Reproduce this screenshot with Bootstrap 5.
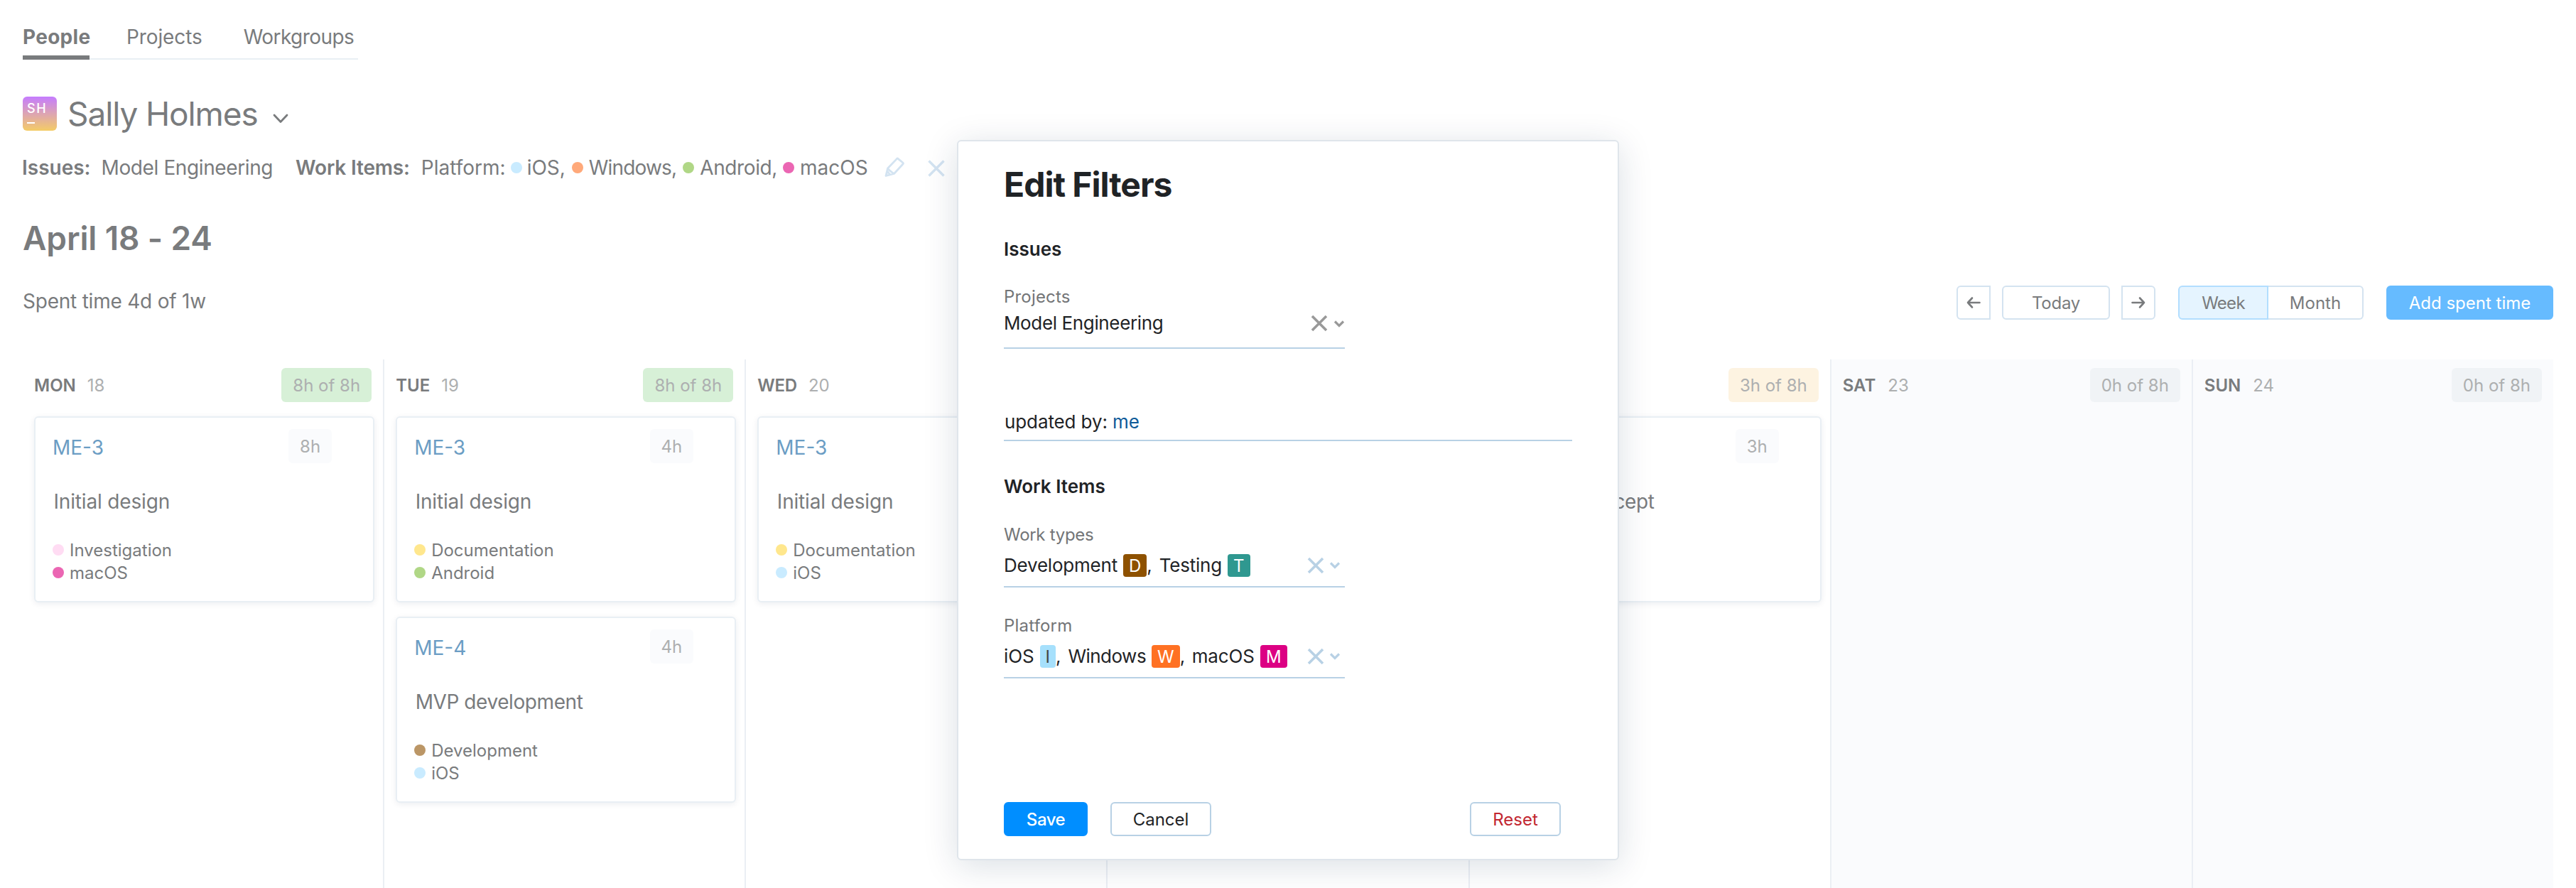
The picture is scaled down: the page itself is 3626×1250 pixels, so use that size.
<!DOCTYPE html>
<html lang="en">
<head>
<meta charset="utf-8">
<title>Timesheets</title>
<link rel="stylesheet" href="https://cdn.jsdelivr.net/npm/bootstrap@5.3.0/dist/css/bootstrap.min.css">
<style>
body{font-family:Inter,"Liberation Sans",sans-serif;font-size:28px;line-height:40px;color:#797b7d;background:#fff;overflow:hidden}
.page{width:3626px;height:1250px;padding:32px 32px 0;overflow:hidden}
svg{flex:none;fill:none;stroke:currentColor;display:block}
.tabs{width:472px;height:52px;box-shadow:inset 0 -2px #e9eff4}
.tabs a{color:inherit;text-decoration:none;height:52px}
.tabs .current{font-weight:700;letter-spacing:.01em;border-bottom:6px solid #797b7d;width:94px}
.who{margin-top:52px;height:48px}
.face{width:48px;height:48px;border-radius:6px;background:linear-gradient(#c57cff,#f4cc66);color:#fff;padding:6px 0 0 6px;font-size:18px;line-height:22px;font-weight:500;letter-spacing:1.5px}
.face i{display:block;width:11px;height:2px;background:#fff;margin-top:8px}
.who h1{font-size:46px;line-height:50px;font-weight:400;letter-spacing:-.024em;margin:0 21px 0 15px}
.filters{margin-top:32px;height:40px}
.filters b{font-weight:600}
.pale{color:#d3e3f1}
.dot{width:16px;height:16px;border-radius:50%;flex:none;background:var(--c)}
.period{margin-top:48px;font-size:46px;line-height:62px;height:60px;font-weight:600;letter-spacing:-.003em}
.tools{margin-top:38px;height:48px}
.btn{--bs-btn-font-size:24px;--bs-btn-line-height:45px;--bs-btn-padding-x:0;--bs-btn-padding-y:0;--bs-btn-border-width:2px;--bs-btn-border-radius:6px;--bs-btn-border-color:#d4e3f0;--bs-btn-color:#797b7d;height:48px}
.ico{width:48px;display:flex;align-items:center;justify-content:center}
.week{--bs-btn-bg:#e5f4ff;--bs-btn-border-color:#b2deff;width:127px;letter-spacing:-.03em}
.cal{margin-top:56px;height:744px}
.day{flex:1 1 0;padding:12px 12px 0 16px}
.day+.day{border-left:2px solid #ebeff4}
.rest{background:#fafbfd}
.dhead{font-size:24px;line-height:50px;height:48px;padding-right:4px}
.dhead b{font-weight:600}
.soft{color:#adafb0}
.pill{height:48px;line-height:50px;border-radius:6px;padding:0 16px;font-size:24px;color:#adafb0;background:var(--c)}
.issue{height:262px;margin-top:20px;border:2px solid #e9eff4;border-radius:6px;background:#fff;box-shadow:0 2px 8px rgba(0,42,76,.08);padding:16px 58px 0 24px}
.issue+.issue{margin-top:20px}
.issue a{color:#6b9dc4;text-decoration:none;padding-top:6px}
.ttl{margin:34px 0 0 1.5px;letter-spacing:-.006em}
.tagline{font-size:24px;line-height:34px;height:32px;gap:8px}
.tagline .dot{margin-top:8px}
.dlg{position:absolute;left:1347px;top:197px;width:932px;height:1014px;border:2px solid #dfe5eb;border-radius:6px;background:#fff;box-shadow:0 8px 48px rgba(0,42,76,.15);color:#1f2326;font-size:26px;line-height:32px;padding:31px 64px 0}
.dlg h2{font-size:48px;line-height:60px;font-weight:700;letter-spacing:-.021em;margin:0}
.dlg h3{font-size:26px;line-height:32px;font-weight:600;margin:0}
.lbl{font-size:24px;line-height:30px;height:28px;color:#737577;letter-spacing:.008em}
.fld{width:480px;border-bottom:2px solid #b8d1e5;letter-spacing:-.004em}
.clr{color:#b8d1e5}
.clr-dark{color:#999}
.tg{display:inline-block;height:32px;line-height:33px;border-radius:4px;padding:0 8px;font-size:24px;color:#fff;background:var(--c);margin-left:8px;letter-spacing:0;text-align:center}
.dlg .btn{--bs-btn-border-color:#b8d1e5;--bs-btn-color:#1f2326}
</style>
</head>
<body>
<div class="page">
  <nav class="tabs d-flex">
    <a class="current" href="#">People</a>
    <a href="#" style="margin-left:52px;letter-spacing:-.004em">Projects</a>
    <a href="#" style="margin-left:58px;letter-spacing:-.02em">Workgroups</a>
  </nav>
  <div class="who d-flex align-items-center">
    <div class="face">SH<i></i></div>
    <h1>Sally Holmes</h1>
    <svg width="22" height="14" stroke-width="2.8" stroke-linecap="round" stroke-linejoin="round" style="margin-top:13px"><path d="M2 2l9 9.5L20 2"/></svg>
  </div>
  <div class="filters d-flex align-items-center gap-2">
    <b style="margin-left:-1px">Issues:</b><span style="margin-left:7px;letter-spacing:-.014em">Model Engineering</span>
    <b style="margin-left:24px;letter-spacing:-.006em">Work Items:</b><span style="margin-left:8px">Platform:</span>
    <span class="dot" style="--c:#c9ebff;margin-left:-1px"></span><span style="margin-left:-1px">iOS,</span>
    <span class="dot" style="--c:#ffa97a;margin-left:1px"></span><span style="letter-spacing:-.03em">Windows,</span>
    <span class="dot" style="--c:#b0d786;margin-left:1px"></span><span style="letter-spacing:-.014em">Android,</span>
    <span class="dot" style="--c:#eb66b3"></span><span>macOS</span>
    <svg class="pale" width="32" height="32" stroke-width="2.8" stroke-linejoin="round" style="margin-left:14px"><path d="M5.5 17L18.3 3.6q1-1 2 0l6.600 5.400q1 1 0 2L14.500 24.500l-11.500 3zM5.500 17l3 3.200 5.500 4.300M3 27.500l2-6.500 4 5z"/></svg>
    <svg class="pale" width="24" height="24" stroke-width="3.4" style="margin-left:22px;margin-top:2px"><path d="M1.500 1.500l21 21M22.500 1.500l-21 21"/></svg>
  </div>
  <div class="period">April 18 - 24</div>
  <div class="tools d-flex justify-content-between">
    <span style="letter-spacing:-.008em;line-height:44px">Spent time 4d of 1w</span>
    <div class="d-flex">
      <button class="btn ico rounded-end-0"><svg width="20" height="18" stroke-width="2.600" stroke-linecap="round" stroke-linejoin="round"><path d="M18.500 9H2M8 2.500L2 9l6 6.500"/></svg></button>
      <button class="btn mx-3" style="width:152px;letter-spacing:-.01em">Today</button>
      <button class="btn ico rounded-start-0"><svg width="20" height="18" stroke-width="2.600" stroke-linecap="round" stroke-linejoin="round"><path d="M1.500 9H18M12 2.500L18 9l-6 6.500"/></svg></button>
      <div class="d-flex" style="margin:0 32px">
        <button class="btn week rounded-end-0">Week</button>
        <button class="btn rounded-start-0 border-start-0" style="width:134px">Month</button>
      </div>
      <button class="btn" style="width:235px;--bs-btn-bg:#66bbff;--bs-btn-border-color:#66bbff;--bs-btn-color:#fff">Add spent time</button>
    </div>
  </div>
  <div class="cal d-flex">
    <div class="day">
      <div class="dhead d-flex"><b>MON</b><span class="soft ms-3 me-auto">18</span><span class="pill" style="--c:#d7f0d7">8h of 8h</span></div>
      <div class="issue">
        <div class="d-flex justify-content-between"><a href="#">ME-3</a><span class="pill" style="--c:#fafbfd">8h</span></div>
        <div class="ttl">Initial design</div>
        <div class="tagline d-flex" style="margin-top:32px"><span class="dot" style="--c:#ffdcf3"></span>Investigation</div>
        <div class="tagline d-flex"><span class="dot" style="--c:#eb66b3"></span>macOS</div>
      </div>
    </div>
    <div class="day">
      <div class="dhead d-flex"><b>TUE</b><span class="soft ms-3 me-auto">19</span><span class="pill" style="--c:#d7f0d7">8h of 8h</span></div>
      <div class="issue">
        <div class="d-flex justify-content-between"><a href="#">ME-3</a><span class="pill" style="--c:#fafbfd">4h</span></div>
        <div class="ttl">Initial design</div>
        <div class="tagline d-flex" style="margin-top:32px"><span class="dot" style="--c:#ffe78d"></span>Documentation</div>
        <div class="tagline d-flex"><span class="dot" style="--c:#b0d786"></span>Android</div>
      </div>
      <div class="issue">
        <div class="d-flex justify-content-between"><a href="#">ME-4</a><span class="pill" style="--c:#fafbfd">4h</span></div>
        <div class="ttl" style="letter-spacing:-.015em">MVP development</div>
        <div class="tagline d-flex" style="margin-top:32px"><span class="dot" style="--c:#bb9666"></span>Development</div>
        <div class="tagline d-flex"><span class="dot" style="--c:#c9ebff"></span>iOS</div>
      </div>
    </div>
    <div class="day">
      <div class="dhead d-flex"><b style="letter-spacing:-.01em">WED</b><span class="soft ms-3">20</span></div>
      <div class="issue">
        <div class="d-flex" style="height:48px"><a href="#">ME-3</a></div>
        <div class="ttl">Initial design</div>
        <div class="tagline d-flex" style="margin-top:32px"><span class="dot" style="--c:#ffe78d"></span>Documentation</div>
        <div class="tagline d-flex"><span class="dot" style="--c:#c9ebff"></span>iOS</div>
      </div>
    </div>
    <div class="day"></div>
    <div class="day">
      <div class="dhead d-flex justify-content-end"><span class="pill" style="--c:#fdf3e1">3h of 8h</span></div>
      <div class="issue">
        <div class="d-flex justify-content-end"><span class="pill" style="--c:#fafbfd">3h</span></div>
        <div class="ttl" style="letter-spacing:-.014em">Proof of concept</div>
      </div>
    </div>
    <div class="day rest">
      <div class="dhead d-flex"><b>SAT</b><span class="soft me-auto" style="margin-left:17px">23</span><span class="pill" style="--c:#f0f3f6">0h of 8h</span></div>
    </div>
    <div class="day rest">
      <div class="dhead d-flex"><b>SUN</b><span class="soft me-auto" style="margin-left:17px">24</span><span class="pill" style="--c:#f0f3f6">0h of 8h</span></div>
    </div>
  </div>
</div>

<div class="dlg">
  <h2>Edit Filters</h2>
  <h3 style="margin-top:45px">Issues</h3>
  <div class="lbl" style="margin-top:36px">Projects</div>
  <div class="fld d-flex align-items-center" style="margin-top:8px;padding-bottom:18px">
    <span class="me-auto" style="letter-spacing:-.014em">Model Engineering</span>
    <svg class="clr-dark" width="24" height="24" stroke-width="3.600"><path d="M2 2l20 20M22 2L2 22"/></svg>
    <svg class="clr-dark" width="16" height="12" stroke-width="3.200" style="margin:2px 0 0 8px"><path d="M2 2.500l6 6 6-6"/></svg>
  </div>
  <div class="fld" style="width:800px;margin-top:87px;padding:0 0 9px 1px">updated by: <span style="color:#0f5b99">me</span></div>
  <h3 style="margin-top:48px">Work Items</h3>
  <div class="lbl" style="margin-top:37px;letter-spacing:-.012em">Work types</div>
  <div class="fld d-flex align-items-center" style="margin-top:14px;padding-bottom:13px">
    <span style="letter-spacing:-.008em">Development</span><span class="tg" style="--c:#8e5100">D</span><span>,</span>
    <span style="margin-left:10px;letter-spacing:-.008em">Testing</span><span class="tg me-auto" style="--c:#2f9890">T</span>
    <svg class="clr" width="24" height="24" stroke-width="3.600"><path d="M2 2l20 20M22 2L2 22"/></svg>
    <svg class="clr" width="16" height="12" stroke-width="3.200" style="margin:0 6px 0 7px"><path d="M2 2.500l6 6 6-6"/></svg>
  </div>
  <div class="lbl" style="margin-top:39px">Platform</div>
  <div class="fld d-flex align-items-center" style="margin-top:14px;padding-bottom:13px">
    <span>iOS</span><span class="tg" style="--c:#a6e0fc;color:#444">I</span><span>,</span>
    <span style="margin-left:10px;letter-spacing:-.02em">Windows</span><span class="tg" style="--c:#ff7123">W</span><span>,</span>
    <span style="margin-left:9.500px">macOS</span><span class="tg me-auto" style="--c:#dc0083">M</span>
    <svg class="clr" width="24" height="24" stroke-width="3.600"><path d="M2 2l20 20M22 2L2 22"/></svg>
    <svg class="clr" width="16" height="12" stroke-width="3.200" style="margin:0 6px 0 7px"><path d="M2 2.500l6 6 6-6"/></svg>
  </div>
  <div class="d-flex" style="margin-top:174px;width:784px">
    <button class="btn" style="width:118px;--bs-btn-bg:#008eff;--bs-btn-border-color:#008eff;--bs-btn-color:#fff;font-weight:500;letter-spacing:-.02em">Save</button>
    <button class="btn" style="width:142px;margin-left:32px">Cancel</button>
    <button class="btn ms-auto" style="width:128px;--bs-btn-color:#c22731">Reset</button>
  </div>
</div>
<script src="https://cdn.jsdelivr.net/npm/bootstrap@5.3.0/dist/js/bootstrap.bundle.min.js"></script>
</body>
</html>
